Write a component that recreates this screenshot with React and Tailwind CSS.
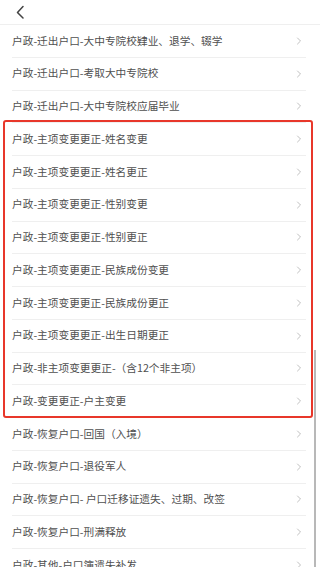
import { ChevronRight } from 'lucide-react';

const before = [
  '户政-迁出户口-大中专院校肄业、退学、辍学',
  '户政-迁出户口-考取大中专院校',
  '户政-迁出户口-大中专院校应届毕业',
];

const marked = [
  '户政-主项变更更正-姓名变更',
  '户政-主项变更更正-姓名更正',
  '户政-主项变更更正-性别变更',
  '户政-主项变更更正-性别更正',
  '户政-主项变更更正-民族成份变更',
  '户政-主项变更更正-民族成份更正',
  '户政-主项变更更正-出生日期更正',
  '户政-非主项变更更正-（含12个非主项）',
  '户政-变更更正-户主变更',
];

const after = [
  '户政-恢复户口-回国（入境）',
  '户政-恢复户口-退役军人',
  '户政-恢复户口- 户口迁移证遗失、过期、改签',
  '户政-恢复户口-刑满释放',
  '户政-其他-户口簿遗失补发',
];

const Row = ({ label }) => (
  <div className="h-[32.75px] pl-3 pr-[14px]">
    <div className="flex h-full items-center justify-between border-b border-[#efefef]">
      <span className="text-[10.7px] text-[#505050] leading-none">{label}</span>
      <ChevronRight className="w-[12px] h-[12px] text-[#b0b0b0] mr-[1px]" strokeWidth={1.6} />
    </div>
  </div>
);

export default function App() {
  return (
    <div
      className="relative w-[320px] h-[567px] overflow-hidden bg-white"
      style={{ fontFamily: '"Noto Sans CJK SC", "Noto Sans", sans-serif' }}
    >
      {/* header */}
      <div className="h-[25px] flex items-center pl-[14px] border-b border-[#efefef]">
        <svg width="12" height="14" viewBox="0 0 12 14" fill="none">
          <path d="M9 1.5 L3.5 7.5 L9 13" stroke="#444" strokeWidth="1.5" strokeLinecap="round" strokeLinejoin="round" />
        </svg>
      </div>

      {before.map((t) => <Row key={t} label={t} />)}

      {/* highlighted group */}
      <div className="relative">
        {marked.map((t) => <Row key={t} label={t} />)}
        <div className="absolute left-[3px] right-[7px] -top-[3px] bottom-0 border-2 border-[#e8372a] rounded-[3px] pointer-events-none" />
      </div>

      {after.map((t) => <Row key={t} label={t} />)}

      {/* scrollbar */}
      <div className="absolute right-[4px] top-[350px] bottom-0 w-[2px] bg-[#b8b8b8]" />
    </div>
  );
}
